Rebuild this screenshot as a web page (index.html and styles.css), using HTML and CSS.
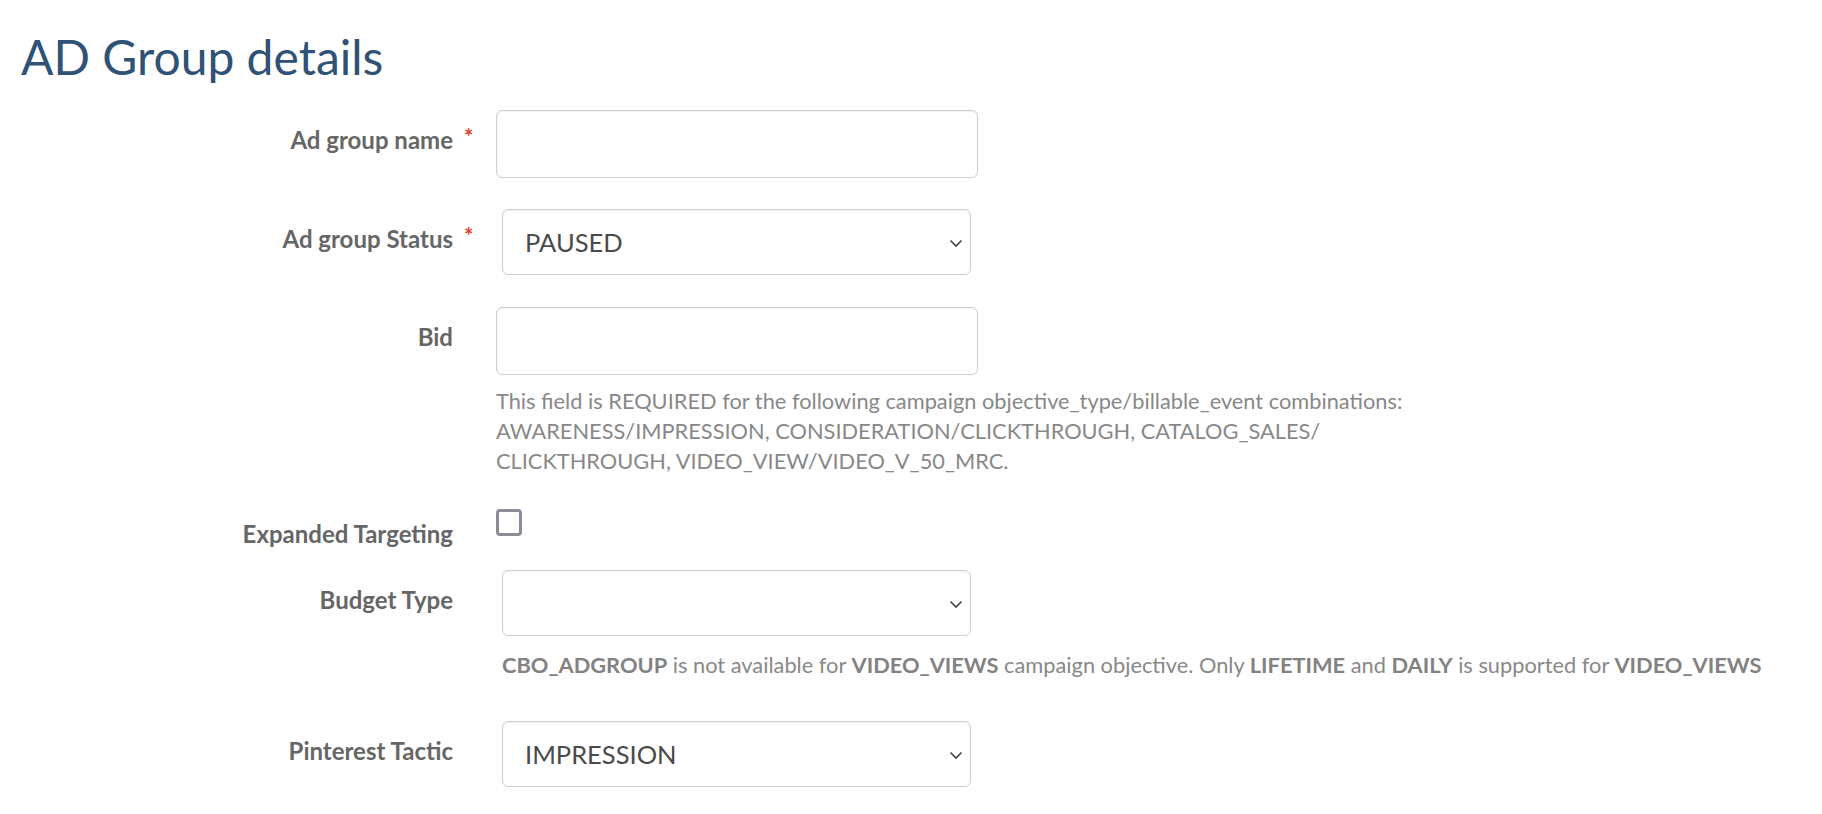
FILE: index.html
```html
<!DOCTYPE html>
<html lang="en">
<head>
<meta charset="utf-8">
<title>AD Group details</title>
<link rel="stylesheet" href="styles.css">
</head>
<body>
<div class="page">
  <h1 class="title">AD Group details</h1>
  <form class="form">
    <div class="row row-name">
      <label class="label required">Ad group name</label>
      <div class="control"><input class="text-input" type="text"></div>
    </div>
    <div class="row row-status">
      <label class="label required">Ad group Status</label>
      <div class="control">
        <div class="select-wrap">
          <select class="select"><option>PAUSED</option></select>
          <svg class="chev" width="14" height="9" viewBox="0 0 14 9"><path d="M1.5 1.5 L7 7 L12.5 1.5" fill="none" stroke="#444" stroke-width="1.6"/></svg>
        </div>
      </div>
    </div>
    <div class="row row-bid">
      <label class="label">Bid</label>
      <div class="control">
        <input class="text-input" type="text">
        <p class="help">This field is REQUIRED for the following campaign objective_type/billable_event combinations: AWARENESS/IMPRESSION, CONSIDERATION/CLICKTHROUGH, CATALOG_SALES/ CLICKTHROUGH, VIDEO_VIEW/VIDEO_V_50_MRC.</p>
      </div>
    </div>
    <div class="row row-check">
      <label class="label">Expanded Targeting</label>
      <div class="control"><span class="checkbox"></span></div>
    </div>
    <div class="row row-budget">
      <label class="label">Budget Type</label>
      <div class="control">
        <div class="select-wrap">
          <select class="select"><option></option></select>
          <svg class="chev" width="14" height="9" viewBox="0 0 14 9"><path d="M1.5 1.5 L7 7 L12.5 1.5" fill="none" stroke="#444" stroke-width="1.6"/></svg>
        </div>
        <p class="help help-wide"><b>CBO_ADGROUP</b> is not available for <b>VIDEO_VIEWS</b> campaign objective. Only <b>LIFETIME</b> and <b>DAILY</b> is supported for <b>VIDEO_VIEWS</b></p>
      </div>
    </div>
    <div class="row row-tactic">
      <label class="label">Pinterest Tactic</label>
      <div class="control">
        <div class="select-wrap">
          <select class="select"><option>IMPRESSION</option></select>
          <svg class="chev" width="14" height="9" viewBox="0 0 14 9"><path d="M1.5 1.5 L7 7 L12.5 1.5" fill="none" stroke="#444" stroke-width="1.6"/></svg>
        </div>
      </div>
    </div>
  </form>
</div>
</body>
</html>
```
FILE: styles.css
```css
html, body {
  margin: 0;
  padding: 0;
  background: #ffffff;
}
body {
  font-family: Lato, "Open Sans", "Liberation Sans", sans-serif;
}
.page {
  padding: 31px 0 0 21px;
}
.title {
  margin: 0;
  font-size: 48px;
  font-weight: 400;
  line-height: 1.1;
  color: #2f5275;
}
.form {
  margin-top: 26px;
}
.row {
  display: flex;
  align-items: flex-start;
}
.label {
  position: relative;
  width: 432px;
  flex: none;
  box-sizing: border-box;
  text-align: right;
  padding-top: 15px;
  font-size: 24px;
  line-height: 29px;
  font-weight: 700;
  color: #666666;
}
.label.required::after {
  content: "*";
  position: absolute;
  left: 443px;
  top: 12px;
  color: #e0402a;
  font-size: 22px;
  font-weight: 700;
}
.control {
  margin-left: 43px;
  display: flex;
  flex-direction: column;
}
.text-input {
  width: 482px;
  height: 68px;
  box-sizing: border-box;
  border: 1px solid #cfcfcf;
  border-radius: 6px;
  box-shadow: inset 0 1px 2px rgba(0,0,0,0.06);
  margin: 0;
  padding: 0 20px;
  font: inherit;
  font-size: 24px;
  background: #fff;
}
.select-wrap {
  position: relative;
  margin-left: 6px;
  width: 469px;
}
.select {
  -webkit-appearance: none;
  appearance: none;
  width: 469px;
  height: 66px;
  box-sizing: border-box;
  border: 1px solid #cfcfcf;
  border-radius: 6px;
  box-shadow: inset 0 1px 2px rgba(0,0,0,0.06);
  background: #fff;
  margin: 0;
  padding: 0 40px 0 22px;
  font-family: Lato, "Open Sans", sans-serif;
  font-size: 25.5px;
  color: #4a4a4a;
}
.chev {
  position: absolute;
  right: 8px;
  top: 30px;
}
.help {
  margin: 11px 0 0;
  width: 930px;
  font-size: 21.8px;
  line-height: 30px;
  color: #888888;
}
.help b {
  font-weight: 700;
  color: #828282;
}
.help-wide {
  width: auto;
  white-space: nowrap;
  margin: 14px 0 0 6px;
}
.checkbox {
  display: block;
  width: 26px;
  height: 27px;
  box-sizing: border-box;
  margin-top: 4px;
  border: 3px solid #8c8c99;
  border-radius: 4px;
  background: #fff;
}
.row-check .label {
  padding-top: 14.5px;
}
.row-name { margin-bottom: 31px; }
.row-status { margin-bottom: 32px; }
.row-bid { margin-bottom: 29px; }
.row-check { margin-bottom: 22px; }
.row-budget { margin-bottom: 41px; }
```
